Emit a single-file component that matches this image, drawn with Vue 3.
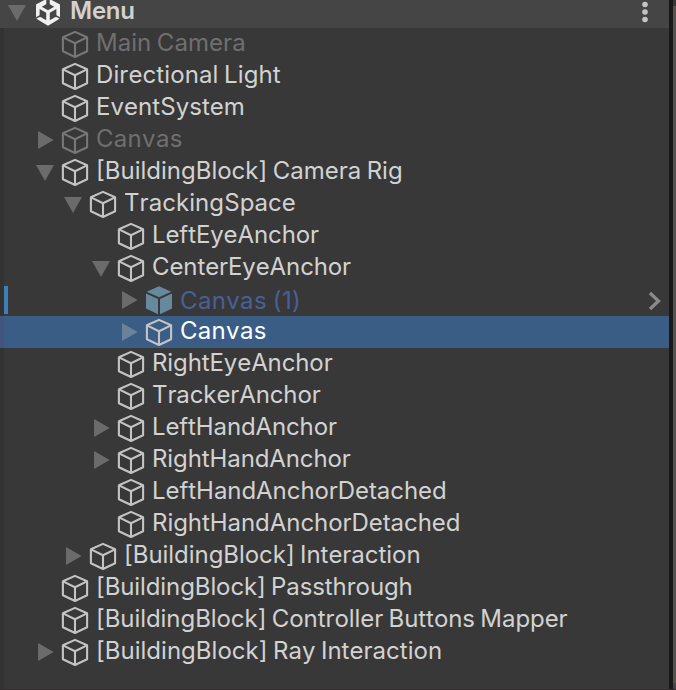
<script setup>
const rows = [
  { label: 'Main Camera', depth: 0, dim: true, tracking: 0.05 },
  { label: 'Directional Light', depth: 0, tracking: 0.1 },
  { label: 'EventSystem', depth: 0, tracking: 0.05 },
  { label: 'Canvas', depth: 0, arrow: 'closed', dim: true, tracking: 0.3 },
  { label: '[BuildingBlock] Camera Rig', depth: 0, arrow: 'open' },
  { label: 'TrackingSpace', depth: 1, arrow: 'open', tracking: 0.07 },
  { label: 'LeftEyeAnchor', depth: 2, tracking: -0.1 },
  { label: 'CenterEyeAnchor', depth: 2, arrow: 'open', tracking: -0.1 },
  { label: 'Canvas (1)', depth: 3, arrow: 'closed', prefab: true, tracking: 0.36 },
  { label: 'Canvas', depth: 3, arrow: 'closed', selected: true, tracking: 0.3 },
  { label: 'RightEyeAnchor', depth: 2, tracking: -0.1 },
  { label: 'TrackerAnchor', depth: 2, tracking: -0.1 },
  { label: 'LeftHandAnchor', depth: 2, arrow: 'closed', tracking: -0.12 },
  { label: 'RightHandAnchor', depth: 2, arrow: 'closed', tracking: -0.1 },
  { label: 'LeftHandAnchorDetached', depth: 2, tracking: -0.05 },
  { label: 'RightHandAnchorDetached', depth: 2, tracking: -0.05 },
  { label: '[BuildingBlock] Interaction', depth: 1, arrow: 'closed', tracking: -0.04 },
  { label: '[BuildingBlock] Passthrough', depth: 0, tracking: -0.1 },
  { label: '[BuildingBlock] Controller Buttons Mapper', depth: 0, tracking: -0.06 },
  { label: '[BuildingBlock] Ray Interaction', depth: 0, arrow: 'closed', tracking: 0.02 },
]
</script>

<template>
  <div class="window">
    <div class="panel">
      <header class="scene">
        <svg class="arrow" viewBox="0 0 20 28"><path d="M1 5H19L10 21Z" /></svg>
        <svg class="logo" viewBox="0 0 26 28">
          <path class="face" d="M13 -2L25 4.6V18.6L13 25.8L1 18.6V4.6Z" />
          <path class="cut" d="M13 10.2L6.8 6.7L13 3.2L19.2 6.7Z" />
          <path class="cut" d="M11.3 -2H14.7V5H11.3Z" />
          <path class="cut" d="M4.6 9L11.2 12.8V20.2L4.6 16.5Z" />
          <path class="cut" d="M21.4 9L14.8 12.8V20.2L21.4 16.5Z" />
          <path class="slit" d="M0 18.6L6 15.4M26 18.6L20 15.4" />
        </svg>
        <span class="title">Menu</span>
        <svg class="more" viewBox="0 0 8 28">
          <circle cx="4" cy="4.5" r="2.8" /><circle cx="4" cy="12" r="2.8" /><circle cx="4" cy="19.5" r="2.8" />
        </svg>
      </header>
      <div
        v-for="(row, i) in rows"
        :key="i"
        class="row"
        :class="{ dim: row.dim, prefab: row.prefab, selected: row.selected }"
      >
        <span class="gutter"></span>
        <span class="mark"></span>
        <span class="indent" :style="{ width: row.depth * 28 + 'px' }"></span>
        <svg class="arrow" viewBox="0 0 20 32">
          <path v-if="row.arrow === 'open'" d="M1 9H19L10 25Z" />
          <path v-else-if="row.arrow === 'closed'" d="M3 7V25L18.7 16Z" />
        </svg>
        <svg v-if="row.prefab" class="cube" viewBox="0 0 28 32">
          <path class="solid" d="M14 2.2L26.3 7.7L14 13.3L1.7 7.7ZM1 9.6L13 15V30.3L1 24.4ZM27 9.6L15 15V30.3L27 24.4Z" />
        </svg>
        <svg v-else class="cube" viewBox="0 0 28 32">
          <path class="wire" d="M14 3.9L26.1 9.3V23.2L14 29L1.9 23.2V9.3ZM2 9.4L14 15.3L26 9.4M14 15.3V29" />
        </svg>
        <span class="label" :style="{ letterSpacing: (row.tracking || 0) + 'px' }">{{ row.label }}</span>
        <svg v-if="row.prefab" class="chevron" viewBox="0 0 14 20"><path d="M2 2L10.5 10L2 18" /></svg>
      </div>
    </div>
    <div class="divider"></div>
    <div class="neighbor"></div>
  </div>
</template>

<style>
body { margin: 0; background: #383838; }
</style>

<style scoped>
.window {
  display: flex;
  width: 676px;
  height: 690px;
  overflow: hidden;
  box-sizing: border-box;
  border-bottom: 1px solid #322e30;
  background: #383838;
  font-family: Inter, "Liberation Sans", sans-serif;
  font-size: 24px;
  font-optical-sizing: none;
  font-kerning: none;
  word-spacing: -1.3px;
  color: #d2d2d2;
}
.panel {
  width: 669px;
  background: linear-gradient(to right, #323232 4px, #383838 4px);
}
.scene {
  display: flex;
  height: 28px;
  background: #454545;
  padding-left: 7px;
}
.arrow { width: 20px; height: 100%; flex: none; fill: #6b6b6b; }
.logo { width: 26px; height: 28px; margin-left: 8px; }
.face { fill: #f0f0f0; }
.cut { fill: #454545; }
.slit { stroke: #454545; stroke-width: 1.6; }
.title { margin-left: 9px; font-weight: 600; line-height: 22px; letter-spacing: -0.25px; }
.more { width: 8px; height: 28px; margin-left: auto; margin-right: 20px; fill: #c4c4c4; }
.row { display: flex; height: 32px; align-items: center; }
.gutter { width: 4px; height: 100%; }
.mark { width: 4px; height: 28px; margin-right: 27px; }
.cube { width: 28px; height: 32px; margin-left: 6px; flex: none; }
.wire { fill: none; stroke: #c4c4c4; stroke-width: 2.1; stroke-linejoin: round; }
.solid { fill: #67899d; }
.label { margin-left: 7px; height: 32px; line-height: 29px; white-space: pre; }
.dim .label { color: #6f6f6f; }
.dim .wire { stroke: #777777; }
.prefab .mark { background: #3d80b9; }
.prefab .label { color: #48609a; line-height: 33px; }
.selected { background: #3a5d86; color: #ffffff; }
.selected .gutter { background: #41557f; }
.selected .arrow { fill: #6b829b; }
.chevron { width: 14px; height: 20px; margin-left: auto; margin-right: 7px; position: relative; top: 1px; }
.chevron path { fill: none; stroke: #8a8a8a; stroke-width: 3.3; }
.divider { width: 4px; background: #191919; }
.neighbor { width: 3px; background: linear-gradient(#383838 6px, #58534e 6px, #58534e 683px, #454547 683px); }
</style>
